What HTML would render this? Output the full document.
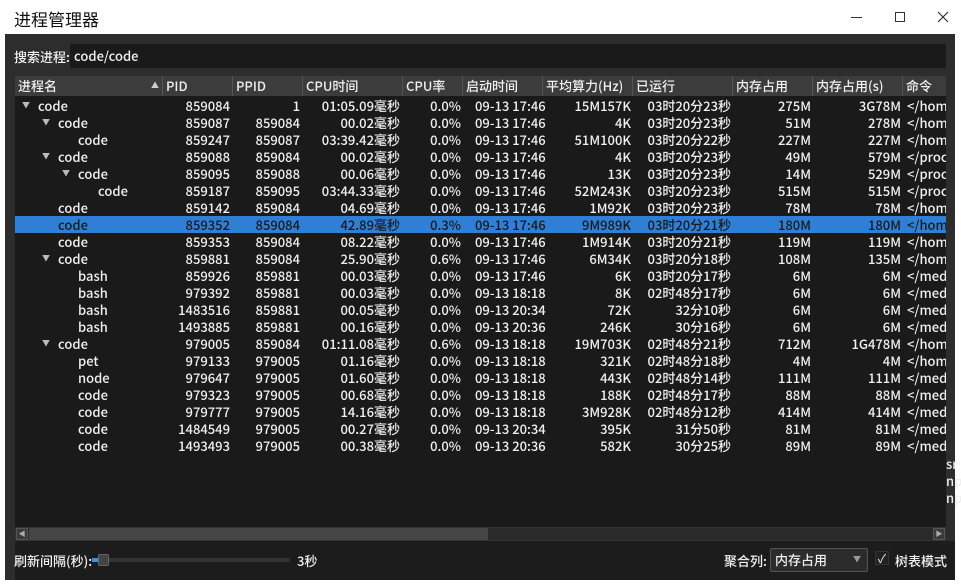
<!DOCTYPE html>
<html><head><meta charset="utf-8"><style>
*{margin:0;padding:0;box-sizing:border-box}
body{width:961px;height:586px;background:#fff;position:relative;overflow:hidden;font-family:"Noto Sans CJK SC",sans-serif;font-size:13px;color:#f0f0f0}
.a{position:absolute;white-space:nowrap}
#title{left:14px;top:6px;font-size:17px;color:#111;font-family:"Noto Sans CJK SC",sans-serif}
#panel{left:5px;top:34px;width:950px;height:546px;background:#2d2d2d}
#bottom{left:15px;top:541px;width:940px;height:39px;background:#1c1c1c}
#table{left:15px;top:76px;width:931px;height:451px;background:#1a1a1a;overflow:hidden}
.hd{position:absolute;top:0;height:20px;background:#3c3c3c;border-right:1px solid #555;line-height:20px;padding-left:3px;font-weight:500}
.r{position:absolute;left:0;width:931px;height:17px;line-height:17px;font-weight:500}
.r span{position:absolute;top:0;white-space:nowrap}
.sel{background:#2f7fd6;color:#1a1a1a}
.tri{font-size:8px;color:#bbb}
</style></head><body>
<div class="a" id="title">进程管理器</div>
<div class="a" style="left:851px;top:17px;width:11px;height:1px;background:#333"></div>
<div class="a" style="left:895px;top:12px;width:10px;height:10px;border:1px solid #333"></div>
<svg class="a" style="left:937px;top:11px" width="12" height="12"><path d="M1 1L11 11M11 1L1 11" stroke="#333" stroke-width="1.2"/></svg>
<div class="a" id="panel"></div>
<div class="a" id="bottom"></div>
<div class="a" style="left:14px;top:47px;font-weight:500">搜索进程:</div>
<div class="a" style="left:70px;top:44px;width:876px;height:24px;background:#1a1a1a;border-radius:2px;padding-left:4px;line-height:24px;font-weight:500">code/code</div>
<div class="a" id="table">
<div class="hd" style="left:0;width:148px">进程名<span style="position:absolute;left:136px;top:0;font-size:8px;color:#ccc">▲</span></div>
<div class="hd" style="left:148px;width:70px">PID</div>
<div class="hd" style="left:218px;width:70px">PPID</div>
<div class="hd" style="left:288px;width:100px">CPU时间</div>
<div class="hd" style="left:388px;width:60px">CPU率</div>
<div class="hd" style="left:448px;width:80px">启动时间</div>
<div class="hd" style="left:528px;width:90px">平均算力(Hz)</div>
<div class="hd" style="left:618px;width:100px">已运行</div>
<div class="hd" style="left:718px;width:80px">内存占用</div>
<div class="hd" style="left:798px;width:90px">内存占用(s)</div>
<div class="hd" style="left:888px;width:43px;border-right:none">命令</div>
<div id="rows"></div>
</div>
<div class="a" style="left:946px;top:455px;line-height:17px;font-weight:500">sr<br>np<br>np</div>
<div class="a" style="left:15px;top:527px;width:931px;height:14px;background:#2a2a2a;border:1px solid #333"></div>
<div class="a" style="left:29px;top:528px;width:459px;height:12px;background:#454545"></div>
<div class="a" style="left:16px;top:528px;width:12px;height:12px;background:#3a3a3a;border:1px solid #555;font-size:7px;line-height:10px;text-align:center;color:#aaa">◀</div>
<div class="a" style="left:933px;top:528px;width:12px;height:12px;background:#3a3a3a;border:1px solid #555;font-size:7px;line-height:10px;text-align:center;color:#aaa">▶</div>
<div class="a" style="left:14px;top:551px;font-weight:500">刷新间隔(秒):</div>
<div class="a" style="left:92px;top:558px;width:198px;height:4px;background:#333;border-radius:2px"></div>
<div class="a" style="left:92px;top:558px;width:6px;height:4px;background:#3a8ee6"></div>
<div class="a" style="left:98px;top:554px;width:11px;height:12px;background:#444;border:1px solid #666;border-radius:2px"></div>
<div class="a" style="left:297px;top:551px;font-weight:500">3秒</div>
<div class="a" style="left:724px;top:551px;font-weight:500">聚合列:</div>
<div class="a" style="left:770px;top:548px;width:98px;height:24px;background:#2c2c2c;border:1px solid #555;border-radius:2px;padding-left:4px;line-height:22px;font-weight:500">内存占用<span style="position:absolute;left:82px;font-size:8px;color:#999">▼</span></div>
<div class="a" style="left:875px;top:551px;width:14px;height:14px;background:#222;border:1px solid #333;font-size:12px;line-height:13px;text-align:center">✓</div>
<div class="a" style="left:895px;top:551px;font-weight:500">树表模式</div>
<script>
var d=[[0,1,"code","859084","1","01:05.09毫秒","0.0%","09-13 17:46","15M157K","03时20分23秒","275M","3G78M","</homsr"],
[1,1,"code","859087","859084","00.02毫秒","0.0%","09-13 17:46","4K","03时20分23秒","51M","278M","</homsr"],
[2,0,"code","859247","859087","03:39.42毫秒","0.0%","09-13 17:46","51M100K","03时20分22秒","227M","227M","</homsr"],
[1,1,"code","859088","859084","00.02毫秒","0.0%","09-13 17:46","4K","03时20分23秒","49M","579M","</proc/u"],
[2,1,"code","859095","859088","00.06毫秒","0.0%","09-13 17:46","13K","03时20分23秒","14M","529M","</proc/u"],
[3,0,"code","859187","859095","03:44.33毫秒","0.0%","09-13 17:46","52M243K","03时20分23秒","515M","515M","</proc/u"],
[1,0,"code","859142","859084","04.69毫秒","0.0%","09-13 17:46","1M92K","03时20分23秒","78M","78M","</homro"],
[1,0,"code","859352","859084","42.89毫秒","0.3%","09-13 17:46","9M989K","03时20分21秒","180M","180M","</homro"],
[1,0,"code","859353","859084","08.22毫秒","0.0%","09-13 17:46","1M914K","03时20分21秒","119M","119M","</homux"],
[1,1,"code","859881","859084","25.90毫秒","0.6%","09-13 17:46","6M34K","03时20分18秒","108M","135M","</homux"],
[2,0,"bash","859926","859881","00.03毫秒","0.0%","09-13 17:46","6K","03时20分17秒","6M","6M","</medux"],
[2,0,"bash","979392","859881","00.03毫秒","0.0%","09-13 18:18","8K","02时48分17秒","6M","6M","</medux"],
[2,0,"bash","1483516","859881","00.05毫秒","0.0%","09-13 20:34","72K","32分10秒","6M","6M","</medux"],
[2,0,"bash","1493885","859881","00.16毫秒","0.0%","09-13 20:36","246K","30分16秒","6M","6M","</medux"],
[1,1,"code","979005","859084","01:11.08毫秒","0.6%","09-13 18:18","19M703K","02时48分21秒","712M","1G478M","</homro"],
[2,0,"pet","979133","979005","01.16毫秒","0.0%","09-13 18:18","321K","02时48分18秒","4M","4M","</homro"],
[2,0,"node","979647","979005","01.60毫秒","0.0%","09-13 18:18","443K","02时48分14秒","111M","111M","</medux"],
[2,0,"code","979323","979005","00.68毫秒","0.0%","09-13 18:18","188K","02时48分17秒","88M","88M","</medor"],
[2,0,"code","979777","979005","14.16毫秒","0.0%","09-13 18:18","3M928K","02时48分12秒","414M","414M","</medux"],
[2,0,"code","1484549","979005","00.27毫秒","0.0%","09-13 20:34","395K","31分50秒","81M","81M","</medux"],
[2,0,"code","1493493","979005","00.38毫秒","0.0%","09-13 20:36","582K","30分25秒","89M","89M","</med:o"]];
var R=[215,285,385,446,null,616,716,796,886],h="";
d.forEach(function(r,i){var s='<div class="r'+(i==7?' sel':'')+'" style="top:'+(21+i*17)+'px">';
var x=23+r[0]*20;if(r[1])s+='<span class="tri" style="left:'+(x-16)+'px">▼</span>';
s+='<span style="left:'+x+'px">'+r[2]+'</span>';
var cols=[3,4,5,6,null,8,9,10,11];
for(var k=0;k<9;k++){if(k==4){s+='<span style="left:460px">'+r[7]+'</span>';continue;}
s+='<span style="right:'+(931-R[k])+'px">'+r[cols[k]]+'</span>';}
s+='<span style="left:892px">'+r[12].replace(/</g,"&lt;")+'</span></div>';h+=s;});
document.getElementById("rows").innerHTML=h;
</script>
</body></html>
